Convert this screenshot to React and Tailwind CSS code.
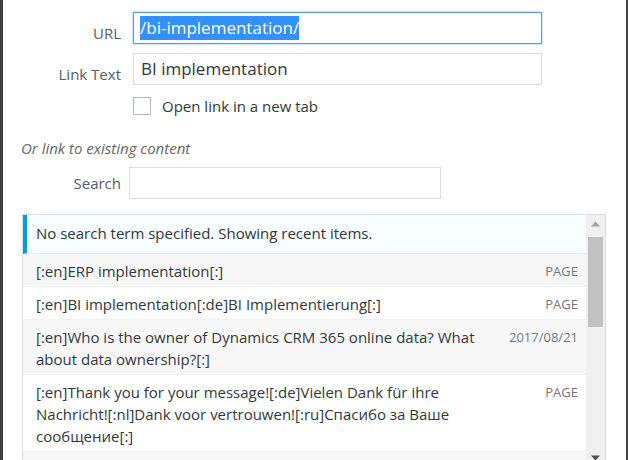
import React from 'react';

const font = { fontFamily: '"Open Sans", "Noto Sans", sans-serif' };

const rows = [
    { title: '[:en]ERP implementation[:]', info: 'PAGE', alt: true },
    { title: '[:en]BI implementation[:de]BI Implementierung[:]', info: 'PAGE', alt: false },
    { title: '[:en]Who is the owner of Dynamics CRM 365 online data? What about data ownership?[:]', info: '2017/08/21', alt: true },
    { title: '[:en]Thank you for your message![:de]Vielen Dank für ihre Nachricht![:nl]Dank voor vertrouwen![:ru]Спасибо за Ваше сообщение[:]', info: 'PAGE', alt: false },
];

const FieldRow = ({ label, children, top, align = 'items-center' }) => (
    <div className={`flex ${align} ${top}`}>
        <label className="w-[99px] shrink-0 text-right text-[15px] leading-[22px] text-[#555d66]">{label}</label>
        {children}
    </div>
);

const App = () => {
    return (
        <div style={font} className="h-[460px] w-[628px] overflow-hidden bg-white flex">
            <div className="w-[3px] shrink-0 bg-[#3f3f3f]" />
            <div className="flex-1 flex flex-col pt-[12px] pl-[19px] pr-[20px]">
                <FieldRow label="URL" align="items-end">
                    <div className="ml-[12px] h-[32px] w-[409px] border border-[#5b9dd9] shadow-[0_0_2px_rgba(30,140,190,0.6)] flex items-center pl-[6px]">
                        <span className="bg-[#3390ff] text-white text-[17px] leading-[24px]">/bi-implementation/</span>
                    </div>
                </FieldRow>
                <FieldRow label="Link Text" align="items-end" top="mt-[9px]">
                    <div className="ml-[12px] h-[32px] w-[409px] border border-[#dddddd] flex items-center pl-[7px] text-[17px] text-[#32373c]">
                        BI implementation
                    </div>
                </FieldRow>
                <div className="flex items-center mt-[10px] pl-[111px]">
                    <span className="h-[18px] w-[18px] border border-[#b4b9be] bg-white" />
                    <span className="ml-[11px] text-[15px] text-[#32373c]">Open link in a new tab</span>
                </div>
                <p className="mt-[19px] -ml-[1px] text-[15px] italic text-[#666666] leading-[22px]">Or link to existing content</p>
                <FieldRow label="Search" top="mt-[8px]">
                    <div className="ml-[8px] h-[32px] w-[312px] border border-[#dddddd]" />
                </FieldRow>
                <div className="mt-[15px] h-[260px] shrink-0 border border-[#dddddd] flex overflow-hidden">
                    <div className="flex-1 flex flex-col">
                        <div className="h-[39px] shrink-0 flex items-center border-l-4 border-[#00a0d2] bg-[#f7fcfe] border-b border-b-[#e5f0f5] pl-[9px] text-[15px] text-[#32373c]">
                            No search term specified. Showing recent items.
                        </div>
                        {rows.map((r) => (
                            <div
                                key={r.title}
                                className={`flex items-start justify-between border-b border-[#f1f1f1] pl-[13px] pr-[8px] pt-[6px] pb-[4px] text-[15px] leading-[22px] text-[#32373c] ${r.alt ? 'bg-[#f7f7f7]' : 'bg-white'}`}
                            >
                                <span className="w-[462px] shrink-0">{r.title}</span>
                                <span className="shrink-0 text-[13px] text-[#72777c] leading-[22px]">{r.info}</span>
                            </div>
                        ))}
                        <div className="flex-1 bg-[#f7f7f7]" />
                    </div>
                    <div className="w-[19px] shrink-0 bg-[#f0f0f0] flex flex-col items-center">
                        <svg width="9" height="6" viewBox="0 0 9 6" className="mt-[6px]">
                            <path d="M0 5.5 L4.5 0.5 L9 5.5 Z" fill="#a3a3a3" />
                        </svg>
                        <div className="mt-[10px] h-[90px] w-[15px] bg-[#c1c1c1]" />
                        <div className="flex-1" />
                        <svg width="9" height="6" viewBox="0 0 9 6" className="mb-[12px]">
                            <path d="M0 0.5 L4.5 5.5 L9 0.5 Z" fill="#505050" />
                        </svg>
                    </div>
                </div>
            </div>
            <div className="w-[2px] shrink-0 bg-[#3f3f3f]" />
        </div>
    );
};

export default App;
